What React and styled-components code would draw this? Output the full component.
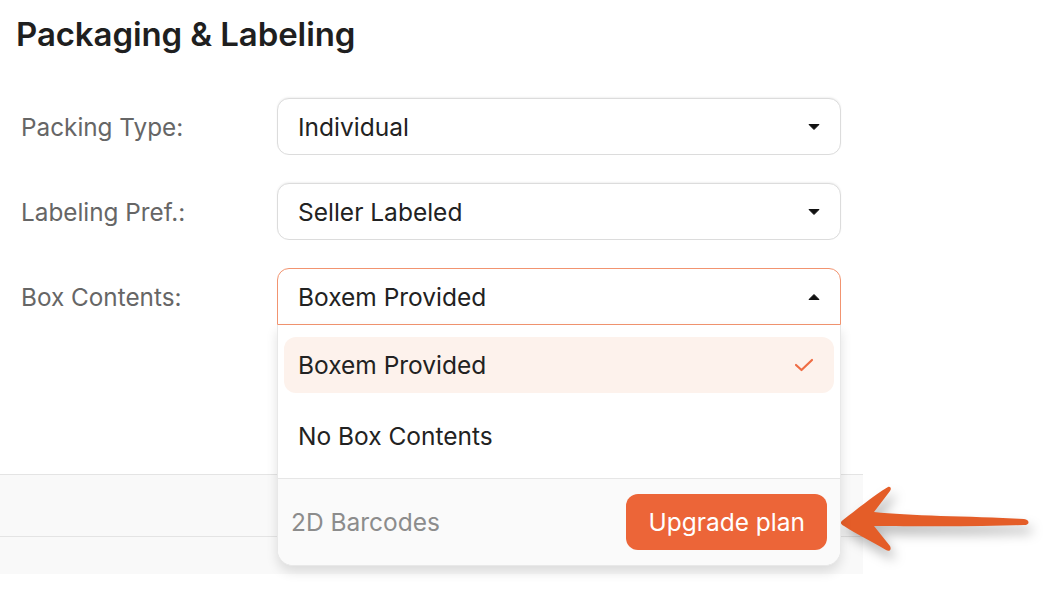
import React from 'react';
import styled, { createGlobalStyle } from 'styled-components';

const GlobalStyle = createGlobalStyle`
  body {
    margin: 0;
    background: #fff;
    font-family: 'Inter', 'Noto Sans', sans-serif;
  }
`;

const Page = styled.div`
  position: relative;
  width: 1044px;
  height: 610px;
  overflow: hidden;
  background: #fff;
`;

const Title = styled.h1`
  margin: 0;
  padding: 12px 0 0 16px;
  font-size: 33px;
  line-height: 44px;
  font-weight: 600;
  color: #1f1f1f;
  letter-spacing: -0.1px;
`;

const Form = styled.div`
  display: grid;
  grid-template-columns: 256px 564px;
  row-gap: 28px;
  align-items: center;
  padding: 42px 0 0 21px;
`;

const Label = styled.label`
  font-size: 24.3px;
  color: #666;
`;

const Field = styled.div`
  position: relative;
`;

const Select = styled.div`
  display: flex;
  align-items: center;
  justify-content: space-between;
  height: 57px;
  box-sizing: border-box;
  padding: 0 20px 0 20px;
  border: 1px solid ${p => (p.$open ? '#f29470' : '#dcdcdc')};
  border-radius: ${p => (p.$open ? '12px 12px 0 0' : '12px')};
  box-shadow: ${p => (p.$open ? 'none' : '0 -1px 2px rgba(0,0,0,0.06)')};
  font-size: 24.5px;
  color: #222;
  background: #fff;
`;

const Menu = styled.div`
  position: absolute;
  left: 0;
  right: 0;
  top: 57px;
  z-index: 2;
  background: #fff;
  border: 1px solid #e8e8e8;
  border-top: none;
  border-radius: 0 0 16px 16px;
  box-shadow: 0 6px 12px rgba(0, 0, 0, 0.12);
  overflow: hidden;
`;

const Options = styled.div`
  display: flex;
  flex-direction: column;
  gap: 15px;
  padding: 12px 6px 14px 6px;
`;

const Option = styled.div`
  display: flex;
  align-items: center;
  justify-content: space-between;
  height: 56px;
  padding: 0 20px 0 14px;
  border-radius: 12px;
  font-size: 24.5px;
  color: #222;
  background: ${p => (p.$active ? '#fdf2ec' : 'transparent')};
`;

const MenuFooter = styled.div`
  display: flex;
  align-items: center;
  justify-content: space-between;
  height: 86px;
  padding: 0 13px 0 13px;
  border-top: 1px solid #e6e6e6;
  background: #fafafa;
`;

const Locked = styled.span`
  font-size: 24.5px;
  color: #8c8c8c;
`;

const UpgradeButton = styled.button`
  height: 56px;
  padding: 0 22px;
  border: none;
  border-radius: 12px;
  background: #ec6538;
  color: #fff;
  font-family: inherit;
  font-size: 24.5px;
`;

const Band = styled.div`
  margin-top: 149px;
  width: 863px;
  background: #f9f9f9;
  border-top: 1px solid #e4e4e4;
`;

const BandRow = styled.div`
  height: ${p => p.$h}px;
  border-bottom: ${p => (p.$line ? '1px solid #e4e4e4' : 'none')};
`;

const Arrow = styled.svg`
  position: absolute;
  left: 838px;
  top: 482px;
  filter: drop-shadow(4px 8px 6px rgba(0, 0, 0, 0.28));
`;

const Caret = ({ up }) => (
  <svg width="12" height="8" viewBox="0 0 12 8">
    <path
      d={up ? 'M1 6.5 L6 1.5 L11 6.5 Z' : 'M1 1.5 L11 1.5 L6 6.5 Z'}
      fill="#111"
      stroke="#111"
      strokeWidth="1"
      strokeLinejoin="round"
    />
  </svg>
);

const Check = () => (
  <svg width="20" height="14" viewBox="0 0 20 14">
    <path d="M2 7 L7.5 12 L18 2" fill="none" stroke="#ef6d44" strokeWidth="2.2" strokeLinecap="round" strokeLinejoin="round" />
  </svg>
);

const App = () => (
  <Page>
    <GlobalStyle />
    <Title>Packaging &amp; Labeling</Title>
    <Form>
      <Label>Packing Type:</Label>
      <Select>
        Individual
        <Caret />
      </Select>
      <Label>Labeling Pref.:</Label>
      <Select>
        Seller Labeled
        <Caret />
      </Select>
      <Label>Box Contents:</Label>
      <Field>
        <Select $open>
          Boxem Provided
          <Caret up />
        </Select>
        <Menu>
          <Options>
            <Option $active>
              Boxem Provided
              <Check />
            </Option>
            <Option>No Box Contents</Option>
          </Options>
          <MenuFooter>
            <Locked>2D Barcodes</Locked>
            <UpgradeButton>Upgrade plan</UpgradeButton>
          </MenuFooter>
        </Menu>
      </Field>
    </Form>
    <Band>
      <BandRow $h={61} $line />
      <BandRow $h={37} />
    </Band>
    <Arrow width="200" height="80" viewBox="0 0 200 80">
      <path
        d="M5 38 C18 28 35 14 50 5 C52 4 54 6 52 9 L36 30 C70 34 130 34 186 37 C192 38 192 43 186 43 C130 45 70 44 36 44 L52 64 C54 68 51 70 48 68 C35 60 18 52 6 44 C2 42 2 40 5 38 Z"
        fill="#e45d28"
      />
    </Arrow>
  </Page>
);

export default App;
